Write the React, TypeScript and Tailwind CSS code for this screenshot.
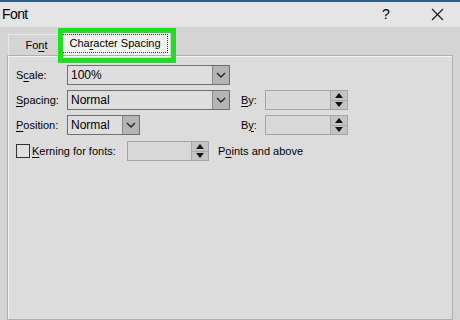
import React from "react";

const font = { fontFamily: "'Liberation Sans', Arial, sans-serif" };

function U({ children }: { children: React.ReactNode }) {
  return <span className="underline underline-offset-2 decoration-1">{children}</span>;
}

function Chevron() {
  return (
    <svg width="10" height="6" viewBox="0 0 10 6">
      <path d="M1 1 L5 5 L9 1" fill="none" stroke="#222" strokeWidth="1.4" />
    </svg>
  );
}

function Dropdown({ value, width }: { value: string; width: string }) {
  return (
    <div className={`${width} shrink-0 h-[20px] flex border border-[#6f6f6f] bg-[#dedede]`}>
      <div className="flex-1 flex items-center pl-[3px] text-[12px] text-black whitespace-nowrap">{value}</div>
      <div className="w-[17px] bg-[#b4b4b4] border-l border-[#8a8a8a] flex items-center justify-center">
        <Chevron />
      </div>
    </div>
  );
}

function Spin({ width }: { width: string }) {
  return (
    <div className={`${width} shrink-0 h-[20px] flex border border-[#a4a4a4] bg-[#d9d9d9]`}>
      <div className="flex-1" />
      <div className="w-[17px] flex flex-col border-l border-[#a8a8a8] bg-[#c4c4c4]">
        <div className="flex-1 flex items-center justify-center border-b border-[#a8a8a8]">
          <svg width="8" height="5" viewBox="0 0 8 5"><path d="M0 5 L4 0 L8 5Z" fill="#111" /></svg>
        </div>
        <div className="flex-1 flex items-center justify-center">
          <svg width="8" height="5" viewBox="0 0 8 5"><path d="M0 0 L4 5 L8 0Z" fill="#111" /></svg>
        </div>
      </div>
    </div>
  );
}

export default function App() {
  return (
    <div className="w-[460px] h-[320px] overflow-hidden relative bg-[#d4d4d4] flex flex-col text-black whitespace-nowrap" style={font}>
      <div className="h-[2px] bg-[#2f5d99]" />
      <div className="h-[25px] bg-[#e5e5e5] flex items-center">
        <div className="pl-[2px] text-[14px] tracking-[-0.6px]">Font</div>
        <div className="flex-1" />
        <div className="text-[14px] w-[10px] mr-[39px]">?</div>
        <svg width="13" height="13" viewBox="0 0 13 13" className="mr-[16px]">
          <path d="M1 1 L12 12 M12 1 L1 12" stroke="#222" strokeWidth="1.3" />
        </svg>
      </div>
      <div className="h-[28px] flex items-end pl-[8px] border-t border-[#d0d0d0]">
        <div className="w-[52px] h-[21px] border-t border-l border-[#e8e8e8] flex items-center justify-center text-[11px] pl-[4px]">
          Fo<U>n</U>t
        </div>
        <div className="w-[110px] h-[24px] bg-[#f4f4f4] flex items-center justify-center">
          <div className="border border-dotted border-[#333] px-[6px] h-[19px] flex items-center text-[11px]">
            Cha<U>r</U>acter Spacing
          </div>
        </div>
      </div>
      <div className="flex-1 mx-[7px] border border-[#b0b0b0] bg-[#dcdcdc] shadow-[inset_1px_1px_0_#f4f4f4] pt-[9px] pl-[8px] flex flex-col gap-[5px] text-[11px]">
        <div className="flex items-center">
          <div className="w-[51px] shrink-0">S<U>c</U>ale:</div>
          <Dropdown value="100%" width="w-[163px]" />
        </div>
        <div className="flex items-center">
          <div className="w-[51px] shrink-0"><U>S</U>pacing:</div>
          <Dropdown value="Normal" width="w-[163px]" />
          <div className="w-[24px] ml-[11px] shrink-0"><U>B</U>y:</div>
          <Spin width="w-[83px]" />
        </div>
        <div className="flex items-center">
          <div className="w-[51px] shrink-0"><U>P</U>osition:</div>
          <Dropdown value="Normal" width="w-[73px]" />
          <div className="w-[24px] ml-[101px] shrink-0">B<U>y</U>:</div>
          <Spin width="w-[83px]" />
        </div>
        <div className="flex items-center mt-[1px]">
          <div className="w-[14px] h-[14px] border border-[#333] bg-[#e0e0e0] shrink-0" />
          <div className="ml-[2px] w-[95px] shrink-0"><U>K</U>erning for fonts:</div>
          <Spin width="w-[82px]" />
          <div className="ml-[9px]">P<U>o</U>ints and above</div>
        </div>
      </div>
      <div className="absolute left-[58px] top-[28px] w-[118px] h-[35px] border-[5px] border-[#1fe01f]" />
    </div>
  );
}
